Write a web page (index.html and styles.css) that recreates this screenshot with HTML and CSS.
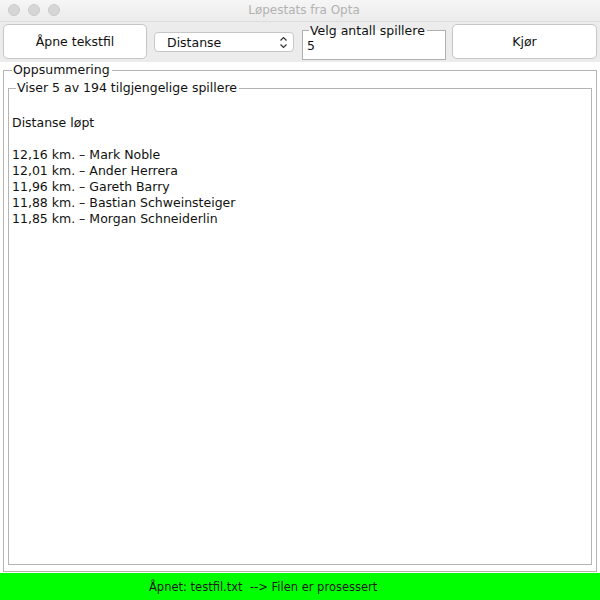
FILE: index.html
```html
<!DOCTYPE html>
<html lang="no">
<head>
<meta charset="utf-8">
<title>Løpestats fra Opta</title>
<link rel="stylesheet" href="styles.css">
</head>
<body>
<div class="window">
  <div class="titlebar">
    <div class="lights">
      <span class="light"></span><span class="light"></span><span class="light"></span>
    </div>
    <div class="title">Løpestats fra Opta</div>
  </div>
  <div class="toolbar">
    <button class="btn btn-open">Åpne tekstfil</button>
    <div class="combo">
      <span class="combo-text">Distanse</span>
      <svg class="combo-arrows" width="9" height="13" viewBox="0 0 9 13">
        <path d="M1.5 4.5 L4.5 1.5 L7.5 4.5 M1.5 8.5 L4.5 11.5 L7.5 8.5" fill="none" stroke="#333" stroke-width="1.2"/>
      </svg>
    </div>
    <fieldset class="field">
      <legend class="field-legend">Velg antall spillere</legend>
      <div class="field-value">5</div>
    </fieldset>
    <button class="btn btn-run">Kjør</button>
  </div>
  <main class="content">
    <fieldset class="outer">
      <legend class="legend">Oppsummering</legend>
      <fieldset class="inner">
        <legend class="legend">Viser 5 av 194 tilgjengelige spillere</legend>
        <div class="result">
          <div class="line">&nbsp;</div>
          <div class="line">Distanse løpt</div>
          <div class="line">&nbsp;</div>
          <div class="line">12,16 km. – Mark Noble</div>
          <div class="line">12,01 km. – Ander Herrera</div>
          <div class="line">11,96 km. – Gareth Barry</div>
          <div class="line">11,88 km. – Bastian Schweinsteiger</div>
          <div class="line">11,85 km. – Morgan Schneiderlin</div>
        </div>
      </fieldset>
    </fieldset>
  </main>
  <footer class="status"><span class="status-text">Åpnet: testfil.txt  --&gt; Filen er prosessert</span></footer>
</div>
</body>
</html>
```
FILE: styles.css
```css
* { box-sizing: border-box; }
html, body { margin: 0; padding: 0; }
body {
  width: 600px;
  height: 600px;
  font-family: "DejaVu Sans", "Liberation Sans", sans-serif;
  font-size: 12.5px;
  color: #000;
  background: #fff;
}
.window {
  width: 600px;
  height: 600px;
  display: flex;
  flex-direction: column;
  overflow: hidden;
}
.titlebar {
  height: 22px;
  flex: 0 0 22px;
  display: flex;
  align-items: center;
  background: linear-gradient(#f6f6f6, #ebebeb);
  border-bottom: 1px solid #dcdcdc;
}
.lights {
  display: flex;
  gap: 8px;
  padding-left: 8px;
  margin-top: -2px;
}
.light {
  width: 12px;
  height: 12px;
  border-radius: 50%;
  background: #d6d6d6;
  border: 1px solid #cbcbcb;
}
.title {
  flex: 1;
  text-align: center;
  margin-left: -52px;
  margin-top: -2px;
  color: #b2b2b2;
  font-size: 12px;
}
.toolbar {
  height: 40px;
  flex: 0 0 40px;
  background: #ececec;
  display: flex;
  align-items: flex-start;
  padding: 1px 3px 0 3px;
}
.btn {
  font-family: inherit;
  font-size: 12.5px;
  color: #111;
  height: 35px;
  background: #fff;
  border: 1px solid #c6c6c6;
  border-radius: 5px;
  padding: 0;
  margin: 0;
}
.btn-open { width: 144px; margin-top: 1px; }
.btn-run { width: 145px; margin-left: 6px; margin-top: 1px; }
.combo {
  width: 140px;
  height: 20px;
  margin-left: 7px;
  margin-top: 9px;
  background: #fff;
  border: 1px solid #c6c6c6;
  border-radius: 4px;
  display: flex;
  align-items: center;
  justify-content: space-between;
  padding: 0 5px 0 12px;
}
.combo-text { color: #111; }
.combo-arrows { display: block; }
.field {
  width: 144px;
  height: 37px;
  margin: 0 0 0 8px;
  padding: 0 0 0 4px;
  border: 1px solid #b0b0b0;
  background: #fff;
  min-width: 0;
}
.field-legend {
  margin-left: 2px;
  padding: 0 2px 0 1px;
  line-height: 15px;
  color: #111;
}
.field-value { line-height: 16px; color: #111; }
.content {
  flex: 1;
  background: #fff;
  padding: 0 3px 1px 3px;
  display: flex;
}
.outer {
  flex: 1;
  margin: 0;
  padding: 0 4px 6px 4px;
  border: 1px solid #b4b4b4;
  display: flex;
  flex-direction: column;
  min-width: 0;
}
.legend {
  padding: 0 2px 0 1px;
  margin-left: 4px;
  line-height: 16px;
  color: #111;
}
.inner {
  flex: 1;
  margin: 2px 0 0 0;
  padding: 0 3px;
  border: 1px solid #b4b4b4;
  min-width: 0;
}
.result { margin-top: 3px; }
.line { line-height: 16px; white-space: pre; color: #111; }
.status {
  height: 27px;
  flex: 0 0 27px;
  background: #00ff00;
  display: flex;
  align-items: center;
  padding-left: 149px;
}
.status-text { white-space: pre; color: #1a1a1a; font-size: 11.5px; }
```
